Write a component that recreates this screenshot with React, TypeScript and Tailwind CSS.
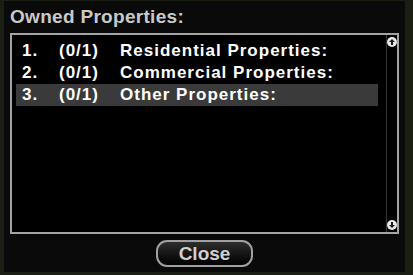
const rows = [
  { n: "1.", c: "(0/1)", label: "Residential Properties:" },
  { n: "2.", c: "(0/1)", label: "Commercial Properties:" },
  { n: "3.", c: "(0/1)", label: "Other Properties:" },
];

function ScrollArrow({ down }: { down?: boolean }) {
  return (
    <div className="w-[10px] h-[10px] rounded-full bg-[#e8e8e8] flex items-center justify-center">
      <svg width="6" height="6" viewBox="0 0 6 6" className={down ? "rotate-180" : ""}>
        <path d="M3 0 L6 3 L4 3 L4 6 L2 6 L2 3 L0 3 Z" fill="#1a1a1a" />
      </svg>
    </div>
  );
}

export default function App() {
  const selected = 2;
  return (
    <div
      className="w-[413px] h-[275px] bg-[#1b1e13] pl-[4px] pr-[8px] pt-[1px] pb-[3px]"
      style={{ fontFamily: '"Liberation Sans", Arial, sans-serif' }}
    >
      <div className="h-full bg-[#0a0a0a] flex flex-col">
        <div className="px-[6px] pt-[3px] h-[32px] text-[19px] leading-[26px] font-bold text-[#c9c9c9] tracking-[0.3px]">
          Owned Properties:
        </div>
        <div className="mx-[6px] h-[201px] border-2 border-[#a4a4a4] bg-black flex">
          <div className="flex-1 pl-[4px] pt-[5px] pr-[8px]">
            {rows.map((r, i) => (
              <div
                key={i}
                className={`h-[22px] flex items-center pl-[6px] text-[17px] font-bold text-white tracking-[1px] ${
                  i === selected ? "bg-[#3a3a3a]" : ""
                }`}
              >
                <span className="w-[37px]">{r.n}</span>
                <span className="w-[61px]">{r.c}</span>
                <span>{r.label}</span>
              </div>
            ))}
          </div>
          <div className="w-[11px] border-l border-[#333] flex flex-col justify-between items-center py-[2px]">
            <ScrollArrow />
            <ScrollArrow down />
          </div>
        </div>
        <div className="flex justify-center mt-[6px]">
          <button className="w-[97px] h-[27px] rounded-[11px] border-2 border-[#a0a0a0] bg-gradient-to-b from-[#2e2e2e] to-[#030303] text-[19px] font-bold text-[#cfcfcf] leading-none">
            Close
          </button>
        </div>
      </div>
    </div>
  );
}
